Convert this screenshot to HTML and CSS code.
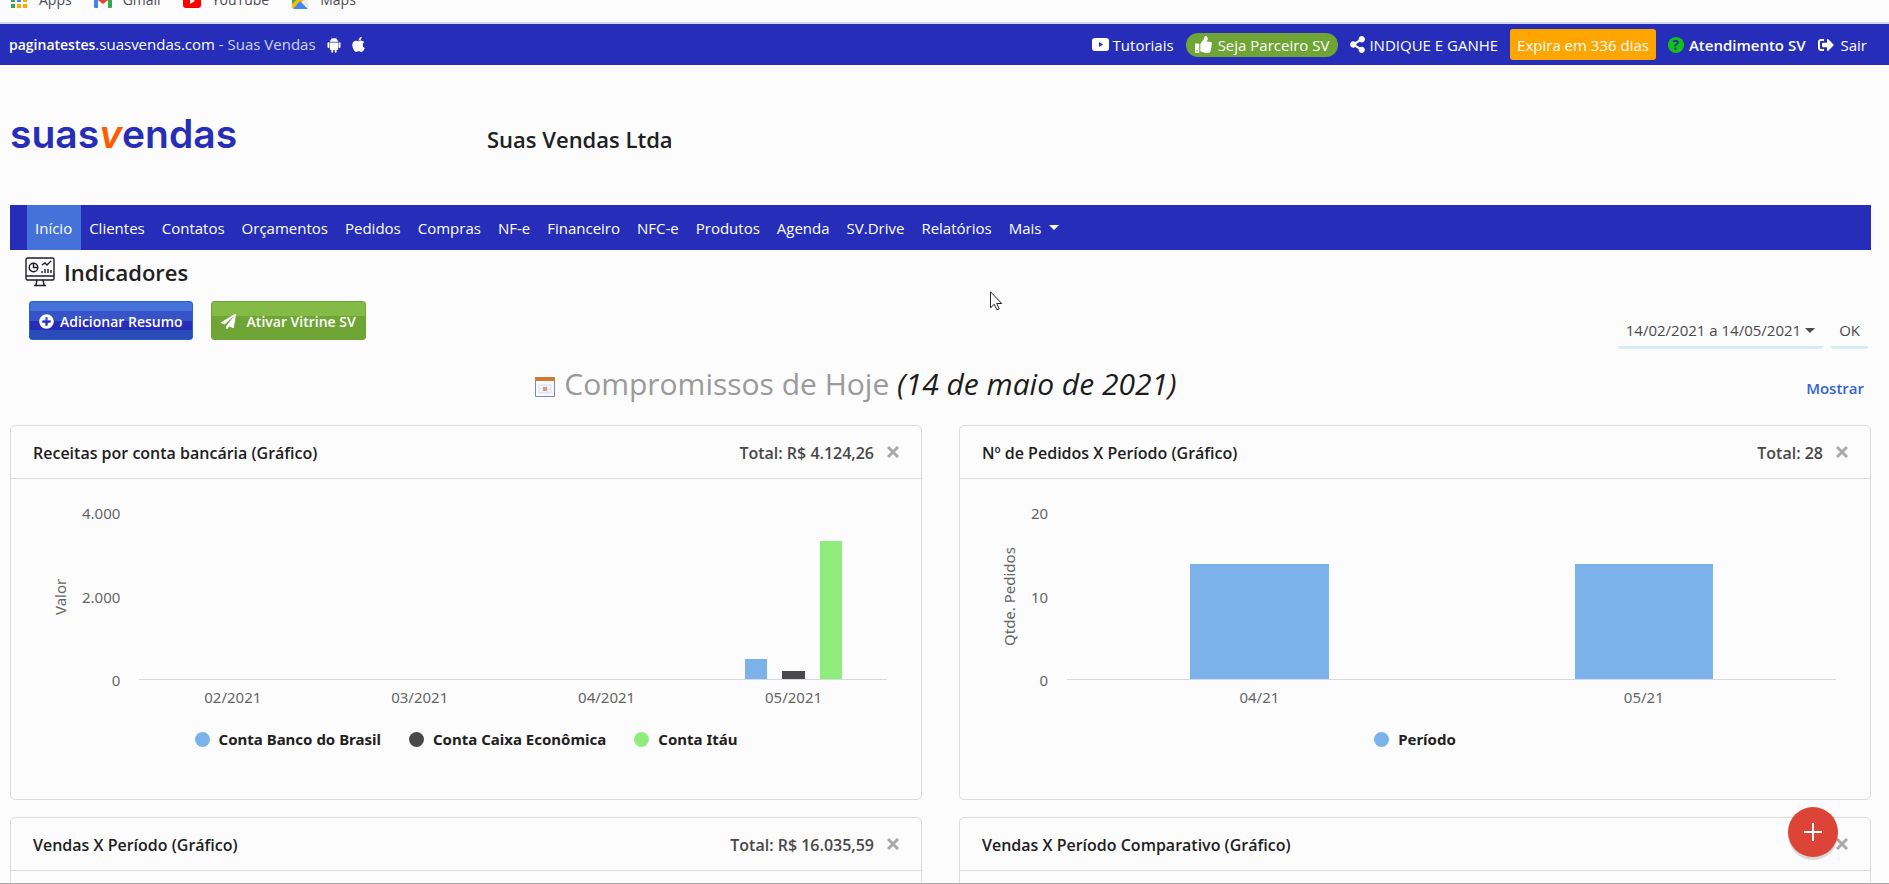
FILE: index.html
```
<!DOCTYPE html>
<html lang="pt-br">
<head>
    <meta charset="UTF-8">
    <meta name="viewport" content="width=device-width, initial-scale=1">
    <title>Suas Vendas - Indicadores</title>
    <link rel="stylesheet" href="styles.css">
</head>
<body>
    <!-- Bookmarks -->
    <div class="bookmarks">
        <a href="#" class="bookmark">
            <svg width="18" height="18" viewBox="0 0 18 18"><path fill="#ea4335" d="M1 1h4v4H1zM7 1h4v4H7zM13 1h4v4h-4z"/><path fill="#34a853" d="M1 7h4v4H1zM1 13h4v4H1z"/><path fill="#4285f4" d="M7 7h4v4H7z"/><path fill="#fbaa04" d="M13 7h4v4h-4zM7 13h4v4H7zM13 13h4v4h-4z"/></svg>
            Apps
        </a>
        <a href="#" class="bookmark">
            <svg width="18" height="18" viewBox="0 0 18 18"><path fill="#4285f4" d="M0 4l4 3v10H1q-1 0-1-1z"/><path fill="#34a853" d="M18 4l-4 3v10h3q1 0 1-1z"/><path fill="#ea4335" d="M0 4q1-3 4-1l5 4 5-4q3-2 4 1v2l-9 7-9-7z"/></svg>
            Gmail
        </a>
        <a href="#" class="bookmark">
            <svg width="18" height="18" viewBox="0 0 18 18"><rect y="3" width="18" height="14" rx="3" fill="#f00"/><path fill="#fff" d="M7 7l5 3-5 3z"/></svg>
            YouTube
        </a>
        <a href="#" class="bookmark">
            <svg width="18" height="18" viewBox="0 0 18 18"><path fill="#34a853" d="M1 2h16L1 17z"/><path fill="#fbbc04" d="M1 13L13 2l4 3L5 17H1z"/><path fill="#ea4335" d="M12 4l5-2v9z"/><path fill="#e8eaed" d="M17 6v11l-6-6z"/><path fill="#4285f4" d="M9 10l8 8H2z"/></svg>
            Maps
        </a>
    </div>

    <!-- Top bar -->
    <header class="topbar">
        <div class="topbar-site">
            <span><strong>paginatestes</strong>.suasvendas.com <span class="topbar-company">- Suas Vendas</span></span>
            <a href="#" aria-label="Android"><svg width="14" height="16" viewBox="0 0 14 16" fill="#fff"><path d="M2.800 4.800Q3 2.700 4.900 1.800L4.200.6l.4-.2.7 1.200q1.700-.6 3.400 0L9.400.4l.4.2-.7 1.200Q11 2.700 11.200 4.800zM2.800 5.400h8.400v6.700q0 1-1 1H9.600v1.700a.9.9 0 0 1-1.800 0v-1.700H6.200v1.700a.9.9 0 0 1-1.800 0v-1.700h-.6q-1 0-1-1z"/><rect x=".5" y="5.300" width="1.900" height="5.600" rx=".9"/><rect x="11.600" y="5.300" width="1.900" height="5.600" rx=".9"/></svg></a>
            <a href="#" aria-label="Apple"><svg width="13" height="17" viewBox="0 0 384 512" fill="#fff"><path d="M318.700 268.700c-.2-36.700 16.400-64.400 50-84.800-18.800-26.900-47.200-41.700-84.700-44.600-35.500-2.800-74.300 20.700-88.500 20.700-15 0-49.400-19.700-76.400-19.700C63.300 141.200 4 184.800 4 273.500q0 39.300 14.400 81.200c12.800 36.700 59 126.700 107.200 125.200 25.200-.6 43-17.900 75.800-17.900 31.800 0 48.300 17.900 76.400 17.900 48.600-.7 90.400-82.500 102.600-119.300-65.200-30.700-61.700-90-61.700-91.900zm-56.600-164.200c27.300-32.400 24.800-61.900 24-72.500-24.100 1.400-52 16.400-67.900 34.900-17.500 19.800-27.800 44.300-25.600 71.900 26.100 2 49.900-11.400 69.500-34.300z"/></svg></a>
        </div>
        <div class="topbar-links">
            <a href="#" class="top-link">
                <svg width="17" height="13" viewBox="0 0 17 13"><rect width="17" height="13" rx="3" fill="#fff"/><path fill="#262eb9" d="M7 4l4 2.500L7 9z"/></svg>
                Tutoriais
            </a>
            <a href="#" class="top-link partner">
                <svg width="17" height="17" viewBox="0 0 512 512" fill="#fff"><path d="M104 224H24c-13.255 0-24 10.745-24 24v240c0 13.255 10.745 24 24 24h80c13.255 0 24-10.745 24-24V248c0-13.255-10.745-24-24-24zM64 472c-13.255 0-24-10.745-24-24s10.745-24 24-24 24 10.745 24 24-10.745 24-24 24zM384 81.452c0 42.416-25.970 66.208-33.277 94.548h101.723c33.397 0 59.397 27.746 59.553 58.098.084 17.938-7.546 37.249-19.439 49.197l-.11.11c9.836 23.337 8.237 56.037-9.308 79.469 8.681 25.895-.069 57.704-16.382 74.757 4.298 17.598 2.244 32.575-6.148 44.632C440.202 511.587 389.616 512 346.839 512l-2.845-.001c-48.287-.017-87.806-17.598-119.560-31.725-15.957-7.099-36.821-15.887-52.651-16.178-6.540-.12-11.783-5.457-11.783-11.998v-213.770c0-3.200 1.282-6.271 3.558-8.521 39.614-39.144 56.648-80.587 89.117-113.111 14.804-14.832 20.188-37.236 25.393-58.902C282.515 39.293 291.817 0 312 0c24 0 72 8 72 81.452z"/></svg>
                Seja Parceiro SV
            </a>
            <a href="#" class="top-link share">
                <svg width="15" height="17" viewBox="0 0 448 512" fill="#fff"><path d="M352 320c-22.608 0-43.387 7.819-59.790 20.895l-102.486-64.054a96.551 96.551 0 0 0 0-41.683l102.486-64.054C308.613 184.181 329.392 192 352 192c53.019 0 96-42.981 96-96S405.019 0 352 0s-96 42.981-96 96c0 7.158.79 14.130 2.276 20.841L155.790 180.895C139.387 167.819 118.608 160 96 160c-53.019 0-96 42.981-96 96s42.981 96 96 96c22.608 0 43.387-7.819 59.790-20.895l102.486 64.054A96.301 96.301 0 0 0 256 416c0 53.019 42.981 96 96 96s96-42.981 96-96-42.981-96-96-96z"/></svg>
                INDIQUE E GANHE
            </a>
            <a href="#" class="top-link expires">Expira em 336 dias</a>
            <a href="#" class="top-link support">
                <span class="question">?</span>
                <strong>Atendimento SV</strong>
            </a>
            <a href="#" class="top-link logout">
                <svg width="16" height="16" viewBox="0 0 512 512" fill="#fff"><path d="M497 273L329 441c-15 15-41 4.500-41-17v-96H152c-13.300 0-24-10.700-24-24v-96c0-13.300 10.700-24 24-24h136V88c0-21.400 25.900-32 41-17l168 168c9.300 9.400 9.300 24.600 0 34zM192 436v-40c0-6.600-5.400-12-12-12H96c-17.700 0-32-14.300-32-32V160c0-17.700 14.300-32 32-32h84c6.600 0 12-5.400 12-12V76c0-6.600-5.400-12-12-12H96c-53 0-96 43-96 96v192c0 53 43 96 96 96h84c6.600 0 12-5.400 12-12z"/></svg>
                Sair
            </a>
        </div>
    </header>

    <main class="page">
        <!-- Logo and company -->
        <div class="brand">
            <a href="#" class="logo">suas<span class="logo-v">v</span>endas</a>
            <h2 class="company">Suas Vendas Ltda</h2>
        </div>

        <!-- Menu -->
        <nav class="menu">
            <a href="#" class="menu-item active">Início</a>
            <a href="#" class="menu-item">Clientes</a>
            <a href="#" class="menu-item">Contatos</a>
            <a href="#" class="menu-item">Orçamentos</a>
            <a href="#" class="menu-item">Pedidos</a>
            <a href="#" class="menu-item">Compras</a>
            <a href="#" class="menu-item">NF-e</a>
            <a href="#" class="menu-item">Financeiro</a>
            <a href="#" class="menu-item">NFC-e</a>
            <a href="#" class="menu-item">Produtos</a>
            <a href="#" class="menu-item">Agenda</a>
            <a href="#" class="menu-item">SV.Drive</a>
            <a href="#" class="menu-item">Relatórios</a>
            <a href="#" class="menu-item">Mais <span class="caret"></span></a>
        </nav>

        <h1 class="page-title">
            <svg width="30" height="30" viewBox="0 0 30 30" fill="none" stroke="#1d1d2b" stroke-width="1.400"><rect x="1" y="1" width="28" height="22" rx="1.500"/><path d="M1 19h28M12 23l-1 5M18 23l1 5M9 28.500h12"/><circle cx="8.500" cy="10.500" r="4.300"/><path d="M8.500 6v4.500H13M17 8l3-2 2 2 4-4M17 16v-2M20 16v-4M23 16v-4M26 16v-3"/></svg>
            Indicadores
        </h1>

        <div class="toolbar">
            <div class="toolbar-buttons">
                <button type="button" class="btn btn-blue">
                    <svg width="15" height="15" viewBox="0 0 512 512" fill="#fff"><path d="M256 8C119 8 8 119 8 256s111 248 248 248 248-111 248-248S393 8 256 8zm144 276c0 6.600-5.400 12-12 12h-92v92c0 6.600-5.400 12-12 12h-56c-6.600 0-12-5.400-12-12v-92h-92c-6.600 0-12-5.400-12-12v-56c0-6.600 5.400-12 12-12h92v-92c0-6.600 5.400-12 12-12h56c6.600 0 12 5.400 12 12v92h92c6.600 0 12 5.400 12 12v56z"/></svg>
                    Adicionar Resumo
                </button>
                <button type="button" class="btn btn-green">
                    <svg width="15" height="15" viewBox="0 0 512 512" fill="#fff"><path d="M476 3.200L12.500 270.600c-18.100 10.400-15.800 35.600 2.200 43.200L121 358.400l287.300-253.200c5.500-4.900 13.300 2.600 8.600 8.300L176 407v80.500c0 23.600 28.500 32.900 42.500 15.800L282 426l124.600 52.200c14.200 6 30.400-2.900 33-18.200l72-432C515 7.800 493.300-6.800 476 3.200z"/></svg>
                    Ativar Vitrine SV
                </button>
            </div>
            <div class="period">
                <button type="button" class="period-btn">14/02/2021 a 14/05/2021<span class="caret"></span></button>
                <button type="button" class="period-btn">OK</button>
            </div>
        </div>

        <!-- Today -->
        <div class="today">
            <h2 class="today-title">
                <svg width="20" height="20" viewBox="0 0 20 20"><path fill="#f6f8fb" stroke="#8389ad" d="M.5.5h19v19H.5z"/><path fill="#cc7a34" d="M0 0h20v4H0z"/><path fill="none" stroke="#cfe4ef" d="M4 8h12v8H4zM4 12h12M8 8v8M12 8v8"/><path fill="#ef8f86" d="M8 10h4v4H8z"/></svg>
                <span>Compromissos de Hoje <em>(14 de maio de 2021)</em></span>
            </h2>
            <a href="#" class="show-link">Mostrar</a>
        </div>

        <!-- Summaries -->
        <div class="cards">
            <section class="card">
                <div class="card-header">
                    <h3>Receitas por conta bancária (Gráfico)</h3>
                    <span class="total">Total: R$ 4.124,26</span>
                    <button type="button" class="close" aria-label="Fechar"><svg width="12" height="12" viewBox="0 0 12 12"><path stroke="#aaa" stroke-width="3" d="M1 1l10 10M11 1L1 11"/></svg></button>
                </div>
                <div class="chart">
                    <div class="axis-title">Valor</div>
                    <div class="axis-y"><span>4.000</span><span>2.000</span><span>0</span></div>
                    <div class="plot">
                        <div class="group"></div>
                        <div class="group"></div>
                        <div class="group"></div>
                        <div class="group">
                            <div class="bar blue" style="height: 12%"></div>
                            <div class="bar dark" style="height: 5%"></div>
                            <div class="bar green" style="height: 83%"></div>
                        </div>
                    </div>
                    <div class="axis-x"><span>02/2021</span><span>03/2021</span><span>04/2021</span><span>05/2021</span></div>
                </div>
                <div class="legend">
                    <span class="legend-item"><i class="dot blue"></i>Conta Banco do Brasil</span>
                    <span class="legend-item"><i class="dot dark"></i>Conta Caixa Econômica</span>
                    <span class="legend-item"><i class="dot green"></i>Conta Itáu</span>
                </div>
            </section>

            <section class="card">
                <div class="card-header">
                    <h3>Nº de Pedidos X Período (Gráfico)</h3>
                    <span class="total">Total: 28</span>
                    <button type="button" class="close" aria-label="Fechar"><svg width="12" height="12" viewBox="0 0 12 12"><path stroke="#aaa" stroke-width="3" d="M1 1l10 10M11 1L1 11"/></svg></button>
                </div>
                <div class="chart">
                    <div class="axis-title">Qtde. Pedidos</div>
                    <div class="axis-y"><span>20</span><span>10</span><span>0</span></div>
                    <div class="plot">
                        <div class="group"><div class="bar wide blue" style="height: 69%"></div></div>
                        <div class="group"><div class="bar wide blue" style="height: 69%"></div></div>
                    </div>
                    <div class="axis-x"><span>04/21</span><span>05/21</span></div>
                </div>
                <div class="legend">
                    <span class="legend-item"><i class="dot blue"></i>Período</span>
                </div>
            </section>

            <section class="card">
                <div class="card-header">
                    <h3>Vendas X Período (Gráfico)</h3>
                    <span class="total">Total: R$ 16.035,59</span>
                    <button type="button" class="close" aria-label="Fechar"><svg width="12" height="12" viewBox="0 0 12 12"><path stroke="#aaa" stroke-width="3" d="M1 1l10 10M11 1L1 11"/></svg></button>
                </div>
            </section>

            <section class="card">
                <div class="card-header">
                    <h3>Vendas X Período Comparativo (Gráfico)</h3>
                    <button type="button" class="close" aria-label="Fechar"><svg width="12" height="12" viewBox="0 0 12 12"><path stroke="#aaa" stroke-width="3" d="M1 1l10 10M11 1L1 11"/></svg></button>
                </div>
            </section>
        </div>
    </main>

    <button type="button" class="fab" aria-label="Adicionar"><svg width="18" height="18" viewBox="0 0 18 18"><path stroke="#fff" stroke-width="2" d="M9 0v18M0 9h18"/></svg></button>

    <svg class="pointer" width="13" height="20" viewBox="0 0 13 20"><path fill="#fff" stroke="#222" d="M.5.8v16l3.700-3.500 2.700 5.500 2.300-1-2.500-5.300h5z"/></svg>
</body>
</html>
```
FILE: styles.css
```
* {
    box-sizing: border-box;
}

body {
    margin: 0;
    height: 100vh;
    overflow: hidden;
    background-color: #fcfcfc;
    color: #212121;
    font-family: "Open Sans", "Noto Sans", sans-serif;
    font-size: 15px;
    line-height: 24px;
}

/* bottom edge of the window */
body::after {
    content: "";
    position: fixed;
    left: 0;
    right: 0;
    bottom: 0;
    height: 1px;
    background-color: #aaa;
}

a {
    color: inherit;
    text-decoration: none;
}

h1, h2, h3, strong {
    margin: 0;
    font-weight: 600;
}

button {
    font: inherit;
    cursor: pointer;
}

svg {
    flex: none;
}

/* Bookmarks */
.bookmarks {
    height: 24px;
    display: flex;
    align-items: flex-end;
    gap: 22px;
    padding: 0 10px 10px;
    border-bottom: 2px solid #d3d9e6;
    color: #4a4d52;
    font-size: 14px;
    overflow: hidden;
}

.bookmark {
    display: flex;
    align-items: center;
    gap: 11px;
}

/* Top bar */
.topbar {
    height: 41px;
    display: flex;
    justify-content: space-between;
    align-items: center;
    padding: 0 22px 0 9px;
    background-color: #262eb9;
    color: #fff;
}

.topbar-site,
.topbar-links,
.top-link {
    display: flex;
    align-items: center;
}

.topbar-site {
    gap: 11px;
}

.topbar-site strong {
    font-size: 14px;
}

.topbar-site a {
    display: flex;
}

.topbar-company {
    color: #d0d3f2;
}

.topbar-links {
    gap: 12px;
}

.top-link {
    gap: 4px;
}

.partner {
    height: 24px;
    gap: 6px;
    padding: 0 9px;
    border-radius: 12px;
    background-color: #6fa535;
}

.expires {
    height: 31px;
    padding: 0 7px;
    border-radius: 3px;
    background-color: #ffa500;
}

.support {
    gap: 5px;
}

.logout {
    gap: 7px;
}

.question {
    width: 16px;
    height: 16px;
    border-radius: 50%;
    background-color: #13c113;
    color: #262eb9;
    font-size: 14px;
    font-weight: 700;
    line-height: 16px;
    text-align: center;
}

/* Page */
.page {
    padding: 0 18px 0 10px;
}

.brand {
    height: 140px;
    display: flex;
    align-items: center;
    padding-top: 8px;
}

.logo {
    width: 477px;
    padding-bottom: 10px;
    color: #262eb9;
    font-family: Inter, sans-serif;
    font-size: 39px;
    font-weight: 600;
    line-height: 48px;
}

.logo-v {
    color: #ff5a00;
    font-style: italic;
}

.company {
    font-size: 22px;
}

.menu {
    height: 45px;
    display: flex;
    padding-left: 17px;
    background-color: #262eb9;
    color: #fff;
}

.menu-item {
    display: flex;
    align-items: center;
    padding: 0 9px 0 8px;
}

.menu-item.active {
    background-color: #4472d8;
}

.caret {
    display: inline-block;
    margin-left: 8px;
    border: 5px solid transparent;
    border-top-color: currentColor;
    border-bottom: 0;
}

.page-title {
    display: flex;
    align-items: center;
    gap: 9px;
    padding: 6px 0 0 15px;
    font-size: 22px;
    line-height: 32px;
}

.toolbar {
    display: flex;
    justify-content: space-between;
    align-items: flex-start;
    padding: 13px 3px 0 19px;
}

.toolbar-buttons {
    display: flex;
    gap: 18px;
}

.btn {
    height: 39px;
    display: flex;
    align-items: center;
    gap: 6px;
    padding: 2px 9px 0;
    border-radius: 3px;
    color: #fff;
    font-size: 14px;
    font-weight: 600;
}

.btn-blue {
    border: 1px solid #2a62cc;
    background: linear-gradient(#4472d8 25%, #3653c8 25% 50%, #262db8 50% 75%, #2a4cb8 75%);
}

.btn-green {
    gap: 11px;
    border: 1px solid #6fa535;
    background: linear-gradient(#84bb46 38%, #6fa535 38%);
}

.period {
    display: flex;
    gap: 8px;
    padding-top: 11px;
}

.period-btn {
    height: 37px;
    padding: 2px 8px 0;
    border: 0;
    border-bottom: 3px solid #d6edf7;
    border-radius: 3px;
    background: none;
    color: #4a4a4a;
}

.period-btn .caret {
    margin: 0 0 3px 4px;
}

/* Today */
.today {
    display: grid;
    grid-template-columns: 10fr 1fr;
    align-items: center;
    padding: 11px 0 17px;
}

.today-title {
    display: flex;
    justify-content: center;
    align-items: center;
    gap: 9px;
    color: #9a9a9a;
    font-size: 30px;
    font-weight: 400;
    line-height: 48px;
}

.today-title svg {
    margin-top: 6px;
}

.today-title em {
    color: #1c1c1c;
}

.show-link {
    padding: 8px 7px 0 0;
    color: #3463d0;
    font-weight: 600;
    text-align: right;
}

/* Cards */
.cards {
    display: grid;
    grid-template-columns: 1fr 1fr;
    gap: 17px 37px;
}

.card {
    height: 375px;
    border: 1px solid #dcdcdc;
    border-radius: 5px;
}

.card-header {
    height: 53px;
    display: flex;
    align-items: center;
    padding: 0 22px;
    border-bottom: 1px solid #dcdcdc;
}

.card-header h3,
.total {
    padding-top: 2px;
    font-size: 16px;
    font-weight: 600;
}

.card-header h3 {
    flex: 1;
}

.total {
    color: #484848;
}

.close {
    display: flex;
    margin-left: 13px;
    padding: 0;
    border: 0;
    background: none;
}

.chart {
    display: grid;
    grid-template-columns: 20px auto 1fr;
    grid-template-rows: 167px 36px;
    column-gap: 12px;
    padding: 34px 34px 0 39px;
    color: #666;
    font-family: "Noto Sans", sans-serif;
}

.axis-title {
    writing-mode: vertical-rl;
    transform: rotate(180deg);
    line-height: 20px;
    text-align: center;
}

.axis-y {
    display: flex;
    flex-direction: column;
    justify-content: space-between;
    margin: -12px 0;
    text-align: right;
}

.plot {
    display: flex;
    margin-left: 7px;
    border-bottom: 1px solid #d3dae3;
}

.group {
    flex: 1;
    display: flex;
    justify-content: center;
    align-items: flex-end;
    gap: 8%;
}

.bar {
    width: 12%;
}

.bar.wide {
    width: 36%;
}

.blue {
    background-color: #7cb2ea;
}

.dark {
    background-color: #4a484b;
}

.green {
    background-color: #90ed7d;
}

.axis-x {
    grid-column: 3;
    display: flex;
    margin-left: 7px;
    padding-top: 5px;
}

.axis-x span {
    flex: 1;
    text-align: center;
}

.legend {
    display: flex;
    justify-content: center;
    gap: 28px;
    padding-top: 11px;
    font-family: "Noto Sans", sans-serif;
    font-weight: 700;
}

.legend-item {
    display: flex;
    align-items: center;
    gap: 9px;
}

.dot {
    width: 15px;
    height: 15px;
    border-radius: 50%;
}

/* Floating button */
.fab {
    position: fixed;
    right: 51px;
    bottom: 27px;
    width: 50px;
    height: 50px;
    display: flex;
    justify-content: center;
    align-items: center;
    border: 0;
    border-radius: 50%;
    background-color: #db4437;
    box-shadow: 0 3px 1px rgba(0, 0, 0, 0.15);
}

.pointer {
    position: absolute;
    left: 990px;
    top: 291px;
}
```
